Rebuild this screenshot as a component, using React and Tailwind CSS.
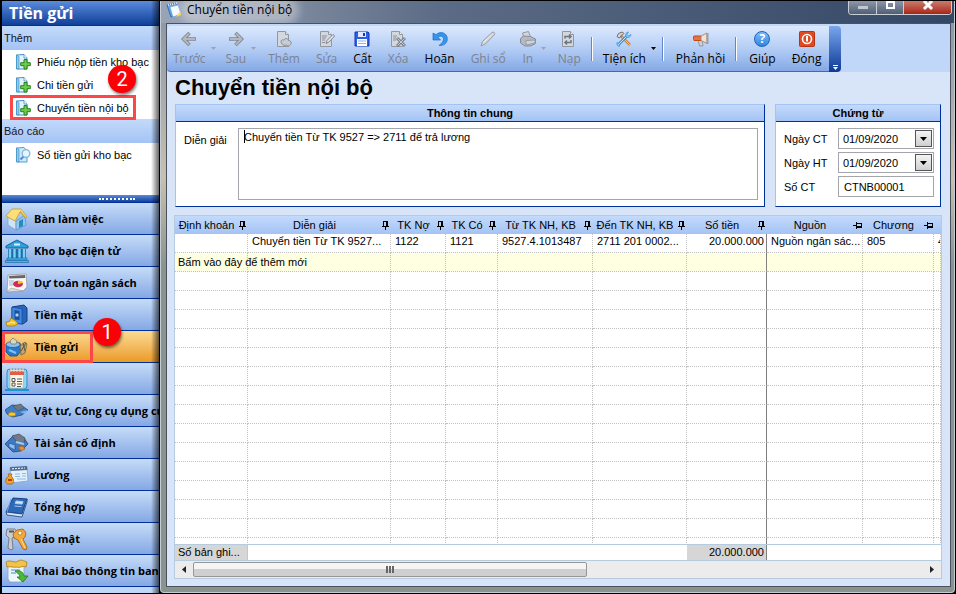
import clsx from "clsx"

const ArrowIcon = ({ flip }) => (
  <svg viewBox="0 0 16 16" className={clsx("h-4 w-4", flip && "-scale-x-100")} fill="none">
    <path d="M15 8H3M8.500 2 2.500 8l6 6" stroke="#80868f" strokeWidth="3.600" />
    <path d="M14.200 8H3M8 2.500 2.500 8 8 13.500" stroke="#b3b8c0" strokeWidth="1.800" />
  </svg>
)

const PageIcon = ({ kind }) => (
  <svg viewBox="0 0 16 16" className="h-4 w-4">
    <path d="M1.500.5h8l3 3v12h-11z" fill="#d3d8df" stroke="#9298a2" />
    <path d="M9.500.5v3h3" fill="#eef0f4" stroke="#9298a2" />
    {kind === "add" && (
      <path d="M5.500 12c-1.500-2.500 1-4 2.500-2.800C9 6.500 12.500 7.500 12.500 9.500c2.500 0 3.500 2.500 2 4-1 2-3.500 1.500-4 .500-2 1-4.500 0-5-2z" fill="#c9cdd3" stroke="#858b95" />
    )}
    {kind === "edit" && (
      <>
        <path d="M3 5h5M3 7h4M3 9h3M3 11.500h3" stroke="#8a9099" />
        <path d="m7 12.500 1-3 6-6 1.700 1.500-6 6.200z" fill="#e6e8ec" stroke="#7d838d" />
      </>
    )}
    {kind === "delete" && (
      <>
        <path d="M3 5h4M3 7h3M3 9h3" stroke="#8a9099" />
        <path d="m7 7 8 8M15 7l-8 8" stroke="#7d838d" strokeWidth="3" />
        <path d="m7.500 7.500 7 7M14.500 7.500l-7 7" stroke="#c9cdd4" />
      </>
    )}
    {kind === "reload" && (
      <path d="M4 7.500V5.500h5M8 3.500l2 2-2 2M10 9v2.500H5M6 9.500l-2 2 2 2" fill="none" stroke="#70767f" strokeWidth="1.500" />
    )}
  </svg>
)

const SaveIcon = () => (
  <svg viewBox="0 0 16 16" className="h-4 w-4">
    <path d="M1 1h13l1 1v13H1z" fill="#2f5fe8" stroke="#1237b8" />
    <path d="M4 1h8v5H4z" fill="#dfe9ff" />
    <path d="M9 2h2v3H9z" fill="#1237b8" />
    <path d="M3 8h10v7H3z" fill="#fff" />
    <path d="M4 10h8M4 12.500h8" stroke="#8fb0f4" />
  </svg>
)

const UndoIcon = () => (
  <svg viewBox="0 0 16 16" className="h-4 w-4">
    <path d="M1 2v7h7.500L6 6.200C8.500 4 12 5.500 11.500 8.500c-.300 2.500-2 4-4.500 6C12 15 15.500 12 15.300 7.500 15 2 8.500-.5 4 3.700z" fill="#3596ee" stroke="#1a6fcb" strokeWidth=".7" />
  </svg>
)

const PenIcon = () => (
  <svg viewBox="0 0 16 16" className="h-4 w-4">
    <path d="m1 15 1.500-4.500L12 1.500c1.500-1.200 3.500.500 2.500 2L5.500 13z" fill="#d0d3d8" stroke="#9a9ea6" />
    <path d="m3.500 11.500 9-8.500" stroke="#eef0f2" />
  </svg>
)

const PrintIcon = () => (
  <svg viewBox="0 0 16 16" className="h-4 w-4">
    <path d="m2.500 2 6-1.500L10.500 6 4 7z" fill="#d3d6db" stroke="#9298a1" />
    <path d="M.5 7.500 3.500 5l7 .500 5 2.500v4.500L10.500 15H5L.5 12z" fill="#b5bac2" stroke="#868c96" />
    <path d="M6 9.500 15 9v3l-9 2z" fill="#d0d4da" stroke="#969ca5" />
  </svg>
)

const ToolsIcon = () => (
  <svg viewBox="0 0 16 16" className="h-4 w-4" fill="none">
    <path d="m5 5 9 9" stroke="#c98436" strokeWidth="2.600" />
    <path d="m6 6 8 8" stroke="#f6c479" />
    <path d="M1 5.500 2.500 2.500 6 1l2 1.500-1 1-1.500.500L4.500 6 3 7z" fill="#d6d6d6" stroke="#6d6d6d" />
    <path d="m3 13 8-8" stroke="#4395d8" strokeWidth="3" />
    <path d="m3 13 8-8" stroke="#bfe3fb" />
    <path d="M15 3.500 12.500 5 11 3.500 12.500 1C10.500 1 9 3 10 5s4 2.500 5-1.500zM1 11.500 3.500 13v2.500C1.500 15.500.500 13.500 1 11.500z" fill="#8ecbf5" stroke="#4395d8" strokeWidth=".8" />
  </svg>
)

const HornIcon = () => (
  <svg viewBox="0 0 16 16" className="h-4 w-4">
    <path d="M5 9h4l1 6H6.500z" fill="#cdd1d6" stroke="#9297a0" />
    <path d="M1 5h7v4.500H1c-.8-1-.8-3.500 0-4.500z" fill="#e9713a" stroke="#bd4b1b" />
    <path d="M8 5l6-3v10.500L8 9.500z" fill="#eee3d8" stroke="#b08e76" />
    <path d="M14.500 2v11" stroke="#9aa0a8" strokeWidth="2" />
  </svg>
)

const HelpIcon = () => (
  <span className="flex h-4 w-4 items-center justify-center rounded-full border border-[#1f62b5] bg-linear-to-b from-[#7cbcf7] to-[#2f85e0] text-xs font-bold text-white">
    ?
  </span>
)

const PowerIcon = () => (
  <svg viewBox="0 0 16 16" className="h-4 w-4">
    <rect x=".5" y=".5" width="15" height="15" rx="1" fill="#e04a22" stroke="#b93212" />
    <circle cx="8" cy="8" r="4.500" fill="none" stroke="#fff" strokeWidth="1.600" />
    <path d="M8 5v5.500" stroke="#fff" strokeWidth="2" />
  </svg>
)

const AddDocIcon = () => (
  <svg viewBox="0 0 16 16" className="h-4 w-4 shrink-0">
    <path d="M1.500 1 9 .500l3 3.500v11H1.500z" fill="#e3f3fd" stroke="#3f8fc4" />
    <path d="M1.500 1 4 2.500V15l-2.500-.5z" fill="#8ccdf0" stroke="#3f8fc4" strokeWidth=".7" />
    <path d="M9 .5V4h3" fill="#fff" stroke="#3f8fc4" strokeWidth=".8" />
    <path d="M9 5.500h3v3.200h3.300v3H12V15H9v-3.300H5.700v-3H9z" fill="#6ccb4f" stroke="#25831c" />
  </svg>
)

const ReportIcon = () => (
  <svg viewBox="0 0 16 16" className="h-4 w-4 shrink-0">
    <path d="M1.500 1 9 .500l3 3.500v11H1.500z" fill="#cfeafb" stroke="#4f9fd2" />
    <path d="M1.500 1 4 2.500V15l-2.500-.5z" fill="#8ccdf0" stroke="#3f8fc4" strokeWidth=".7" />
    <path d="m5.500 12.500 3-3" stroke="#5b7ed6" strokeWidth="2" />
    <circle cx="11" cy="6.500" r="3.800" fill="#e6f5ff" stroke="#7fb4dc" strokeWidth="1.300" />
  </svg>
)

const navIcons = {
  home: (
    <>
      <path d="m3 10 8 4v9l-8-5z" fill="#cfe4f5" stroke="#6b9cc4" strokeWidth=".6" />
      <path d="m11 14 9-6 1 10-10 5z" fill="#8fc6ec" stroke="#4a8bbd" strokeWidth=".6" />
      <path d="m14 14 4-2v7l-4 2z" fill="#2e86c6" />
      <path d="m1 9 6-7 9 0 6 8-2 1-5-6-5 9z" fill="#fbe07a" stroke="#c79a2b" strokeWidth=".8" />
      <path d="m15 4 6 7" stroke="#c79a2b" />
    </>
  ),
  bank: (
    <>
      <path d="m1 7 11-6 11 6v2H1z" fill="#2ea0dc" stroke="#12659d" />
      <path d="M9 5.500h6" stroke="#d8f1ff" strokeWidth="2" />
      <path d="M3 10h18v9H3z" fill="#1c6dab" />
      <path d="M5 10v9M9.500 10v9M14.500 10v9M19 10v9" stroke="#7dd0f5" strokeWidth="2.400" />
      <path d="M2 19h20v2H2zM.500 21.500h23v2H.500z" fill="#49b4e6" stroke="#12659d" strokeWidth=".6" />
    </>
  ),
  budget: (
    <>
      <path d="m3 4 18-1 1 13-4 4-16 1z" fill="#f6f6f6" stroke="#999" strokeWidth=".8" />
      <path d="m4 5 16-1 .3 3-16 .6z" fill="#666" />
      <path d="M4 10h5M4 12h4M4 14h4" stroke="#9ab5d9" />
      <ellipse cx="13" cy="13" rx="5" ry="3.300" fill="#cf2d55" />
      <path d="m13 13 5-1c0-2-3-2.500-5-2z" fill="#f2c832" />
      <path d="m2 21 4-4 12 3z" fill="#dadada" stroke="#999" strokeWidth=".6" />
    </>
  ),
  safe: (
    <>
      <path d="m7 4 12-2 3 3v13l-4 3-11-1z" fill="#2864be" stroke="#153f86" />
      <path d="m7 4 10 2v15L7 20z" fill="#3f8ae0" stroke="#153f86" strokeWidth=".6" />
      <path d="m9.500 7 5 1v9l-5-.5z" fill="#1d4f9f" />
      <circle cx="12" cy="12" r="2" fill="#b3d3f6" stroke="#153f86" strokeWidth=".6" />
      <path d="M1 19h3l2-4 5 3 2 3-4 2H2z" fill="#f7c321" stroke="#a9780c" strokeWidth=".8" />
      <path d="m2 21 4-2 4 1" stroke="#fff0a0" fill="none" />
    </>
  ),
  deposit: (
    <>
      <path d="m1 9 14-1 1 8-4 5H5l-4-4z" fill="#2a78c8" stroke="#164a88" strokeWidth=".8" />
      <ellipse cx="8" cy="9.500" rx="7" ry="3" fill="#8ac2ee" stroke="#164a88" strokeWidth=".6" />
      <path d="m5 6 3-3 4 3-1 3H6z" fill="#ddd7c2" stroke="#807b6a" strokeWidth=".8" />
      <path d="m15 11 5-4 2 2-2 9-4 2z" fill="#b9a77d" stroke="#6c6040" strokeWidth=".8" />
      <path d="m16 16 5-8M18 8l2 8" stroke="#5f5538" />
      <path d="m4 15 7 3" stroke="#83c0f2" strokeWidth="2" />
    </>
  ),
  receipt: (
    <>
      <rect x="2" y="2" width="20" height="20" rx="3" fill="#8fd3f4" stroke="#2a8cc4" />
      <path d="M5 3h14l-1 18H5z" fill="#fff8e9" stroke="#b8a98b" strokeWidth=".7" />
      <path d="M5 4h14v4H5z" fill="#e25d4e" />
      <path d="M6 1v4M9 1v4M12 1v4M15 1v4M18 1v4" stroke="#f6ddd2" />
      <path d="M7 11.500h3v3H7zM7 16h3v3H7z" fill="none" stroke="#555" />
      <path d="M12 12h5M12 14.500h5M12 17h5M12 19.500h4" stroke="#555" />
      <path d="M0 23h24" stroke="#1d95d4" strokeWidth="2" />
    </>
  ),
  supplies: (
    <>
      <path d="m0 11 7-5 10 1 6 4-6 5-9 2-6-3z" fill="#3f7cc6" stroke="#1d4b8a" strokeWidth=".8" />
      <path d="m8 7 8-2 3 4-6 3z" fill="#6d7883" stroke="#444d57" strokeWidth=".6" />
      <path d="m15 13 8-2-3 4z" fill="#7db5ef" />
      <path d="m3 15 3-2 5 1-1 3-6 0z" fill="#f6c72f" stroke="#a47c10" strokeWidth=".7" />
    </>
  ),
  assets: (
    <>
      <path d="m0 13 8-8 11 2 4 6-7 7-8 1z" fill="#3c7ac4" stroke="#1c4781" strokeWidth=".8" />
      <path d="m7 5 7-2 6 4-1 5-7-1z" fill="#6f7b88" stroke="#414b57" strokeWidth=".7" />
      <path d="m4 12 6 2v5l-6-3z" fill="#8fbdf0" stroke="#1c4781" strokeWidth=".6" />
      <path d="m13 16 5-1 2 3-4 2z" fill="#ea8b2e" stroke="#9d5310" strokeWidth=".6" />
      <path d="m11 11 8 2" stroke="#a6cbf4" strokeWidth="2" />
    </>
  ),
  payroll: (
    <>
      <path d="m5 5 17-1 1 14-17 2z" fill="#e4f1fd" stroke="#77a6d4" strokeWidth=".8" />
      <path d="m5 4 17-1 .3 4L5.300 8z" fill="#4c6c93" />
      <path d="M7 5.800 20 5" stroke="#dbe7f5" strokeWidth="1.200" strokeDasharray="2 1" />
      <path d="M10 11h5M10 13.500h5M17 10.500h4M17 13h4M12 16h9" stroke="#8cb8e4" />
      <path d="M3 11h4l-1 2c3 2 3.500 7 1 8H2.500C0 20 0 15 4 13z" fill="#f0a527" stroke="#a5620e" strokeWidth=".8" />
      <path d="M3 17h4" stroke="#c93b16" strokeWidth="2" />
    </>
  ),
  ledger: (
    <>
      <path d="m8 3 14 1-5 15L1 17z" fill="#2c69b8" stroke="#153e7c" />
      <path d="m1 17 16 2 5-15v3l-5 15-15-2z" fill="#d8e5f5" stroke="#153e7c" strokeWidth=".8" />
      <path d="m11 6 7 .600-.8 2.500-7-.6zM9.500 11l7 .600" fill="#d3e6fb" stroke="#a9caef" />
      <path d="m6 4-4 13" stroke="#75a9e3" />
    </>
  ),
  keys: (
    <>
      <path d="M2 2h8l2 3-2 5-3 1 1 11-2 1-3-2 1-10-3-3z" fill="#c9ccd1" stroke="#666b72" strokeWidth=".8" />
      <path d="M4 4.500h5" stroke="#555" strokeWidth="2" />
      <path d="m12 3 6-1 3 4-1 4-2 2 4 8-1 3-3-1-5-9-4-2-1-4z" fill="#f2a93b" stroke="#9d5e10" strokeWidth=".8" />
      <circle cx="15" cy="6" r="2" fill="#fff1cf" stroke="#9d5e10" strokeWidth=".6" />
      <path d="m16 12 4 9" stroke="#ffdf96" />
    </>
  ),
  declare: (
    <>
      <path d="M3 6h16v14l-3 3H5l-2-3z" fill="#eef5fb" stroke="#86a6c4" strokeWidth=".8" />
      <path d="M1 3c4-3 9 2 12-1 3-2 6 0 9 1l-1 5c-4-2-7 2-9 0-3 1-7-1-10 0z" fill="#f3c24a" stroke="#a97b14" strokeWidth=".8" />
      <path d="M6 11h9M6 14h5" stroke="#9dc0e0" strokeWidth="2" />
      <path d="M10 12c4-1 8 0 9 5h4l-5 6-6-5h3c0-3-3-4-5-6z" fill="#4cb93b" stroke="#1f7a17" strokeWidth=".8" />
    </>
  ),
}

const NavIcon = ({ name }) => (
  <svg viewBox="0 0 24 24" className="h-6 w-6 shrink-0">
    {navIcons[name]}
  </svg>
)

const addLinks = [
  { label: "Phiếu nộp tiền kho bạc" },
  { label: "Chi tiền gửi", badge: "2" },
  { label: "Chuyển tiền nội bộ", marked: true },
]

const navItems = [
  { label: "Bàn làm việc", icon: "home" },
  { label: "Kho bạc điện tử", icon: "bank" },
  { label: "Dự toán ngân sách", icon: "budget" },
  { label: "Tiền mặt", icon: "safe" },
  { label: "Tiền gửi", icon: "deposit", active: true },
  { label: "Biên lai", icon: "receipt" },
  { label: "Vật tư, Công cụ dụng cụ", icon: "supplies" },
  { label: "Tài sản cố định", icon: "assets" },
  { label: "Lương", icon: "payroll" },
  { label: "Tổng hợp", icon: "ledger" },
  { label: "Bảo mật", icon: "keys" },
  { label: "Khai báo thông tin ban", icon: "declare" },
]

const tools = [
  { label: "Trước", icon: <ArrowIcon />, disabled: true, menu: true },
  { label: "Sau", icon: <ArrowIcon flip />, disabled: true, menu: true },
  { label: "Thêm", icon: <PageIcon kind="add" />, disabled: true },
  { label: "Sửa", icon: <PageIcon kind="edit" />, disabled: true },
  { label: "Cất", icon: <SaveIcon /> },
  { label: "Xóa", icon: <PageIcon kind="delete" />, disabled: true },
  { label: "Hoãn", icon: <UndoIcon /> },
  { label: "Ghi sổ", icon: <PenIcon />, disabled: true },
  { label: "In", icon: <PrintIcon />, disabled: true, menu: true },
  { label: "Nạp", icon: <PageIcon kind="reload" />, disabled: true, divider: true },
  { label: "Tiện ích", icon: <ToolsIcon />, menu: true, divider: true },
  { label: "Phản hồi", icon: <HornIcon />, divider: true },
  { label: "Giúp", icon: <HelpIcon /> },
  { label: "Đóng", icon: <PowerIcon /> },
]

const columns = [
  { title: "Định khoản", width: "w-[73px]", pin: "down" },
  { title: "Diễn giải", width: "w-[143px]", pin: "down", value: "Chuyển tiền Từ TK 9527..." },
  { title: "TK Nợ", width: "w-[55px]", pin: "down", value: "1122" },
  { title: "TK Có", width: "w-[52px]", pin: "down", value: "1121" },
  { title: "Từ TK NH, KB", width: "w-[95px]", pin: "down", value: "9527.4.1013487" },
  { title: "Đến TK NH, KB", width: "w-[94px]", pin: "down", value: "2711 201 0002..." },
  { title: "Số tiền", width: "w-[80px]", pin: "down", value: "20.000.000", frozen: true },
  { title: "Nguồn", width: "w-[96px]", pin: "side", value: "Nguồn ngân sác..." },
  { title: "Chương", width: "w-[71px]", pin: "side", value: "805" },
  { title: "", width: "", value: "4" },
]

const Pin = ({ side }) => (
  <svg viewBox="0 0 9 9" className={clsx("h-[9px] w-[9px] shrink-0", side && "rotate-90")} shapeRendering="crispEdges">
    <path d="M2 0h5v6H2zM3 1v4h2V1z" fillRule="evenodd" fill="#000" />
    <path d="M1 5h7v1H1zM4 6h1v3H4z" fill="#000" />
  </svg>
)

const Caret = ({ small }) => (
  <svg viewBox="0 0 7 4" className={clsx("shrink-0", small ? "h-[3px] w-[5px]" : "h-1 w-[7px]")} fill="currentColor">
    <path d="M0 0h7L3.500 4z" />
  </svg>
)

const Badge = ({ children, className }) => (
  <span
    className={clsx(
      "absolute z-10 flex h-7 w-7 items-center justify-center rounded-full bg-[#fb0007] font-[Roboto,sans-serif] text-xl font-normal text-white shadow-[1px_2px_3px_rgba(0,0,0,0.5)]",
      className
    )}
  >
    {children}
  </span>
)

function Sidebar() {
  return (
    <aside className="relative flex w-[157px] shrink-0 flex-col overflow-hidden bg-white">
      <h2 className="h-[25px] shrink-0 border-b border-[#00309c] bg-linear-to-b from-[#5a8bdc] to-[#0f3f99] pl-[7px] font-[Open_Sans,sans-serif] text-base leading-6 font-bold text-white">
        Tiền gửi
      </h2>
      <SectionTitle>Thêm</SectionTitle>
      <ul>
        {addLinks.map((link) => (
          <li key={link.label} className="relative">
            <a href="#" className="flex h-[23px] items-center gap-[6px] pl-[13px] whitespace-nowrap">
              <AddDocIcon />
              {link.label}
            </a>
            {link.marked && <span className="absolute -inset-y-px left-2 w-[126px] border-[3px] border-[#fb4747]" />}
            {link.badge && <Badge className="-top-2 left-[106px]">{link.badge}</Badge>}
          </li>
        ))}
      </ul>
      <SectionTitle>Báo cáo</SectionTitle>
      <a href="#" className="flex h-6 items-center gap-[6px] pl-[13px] whitespace-nowrap">
        <ReportIcon />
        Sổ tiền gửi kho bạc
      </a>
      <div className="min-h-0 flex-1" />
      <div className="flex h-[7px] shrink-0 items-center justify-center bg-linear-to-b from-[#5a8bdc] to-[#0f3f99] pl-[72px]">
        <div className="w-9 border-t-2 border-dotted border-white" />
      </div>
      <nav className="shrink-0 border-t border-[#00309c]">
        {navItems.map((item) => (
          <div key={item.label} className="relative">
            <button
              type="button"
              className={clsx(
                "flex h-8 w-full items-center gap-[5px] overflow-hidden border-b border-[#00309c] bg-linear-to-b pl-[3px] font-[Open_Sans,sans-serif] text-[11px] font-bold whitespace-nowrap",
                item.active ? "from-[#fbdb90] to-[#eb9a1d]" : "from-[#c6dcf8] to-[#85a8e4]"
              )}
            >
              <NavIcon name={item.icon} />
              {item.label}
            </button>
            {item.active && (
              <>
                <span className="absolute inset-y-0 left-0 w-[91px] border-[3px] border-[#fb4747]" />
                <Badge className="-top-[13px] left-[91px]">1</Badge>
              </>
            )}
          </div>
        ))}
      </nav>
      <div className="h-[6px] shrink-0 bg-[#c0d8f7]" />
      <div className="pointer-events-none absolute inset-y-0 right-0 w-2 bg-linear-to-r from-transparent to-black/60" />
    </aside>
  )
}

const SectionTitle = ({ children }) => (
  <h3 className="h-6 shrink-0 bg-linear-to-b from-[#c3dafa] to-[#a4c3f5] pl-[2px] leading-6 text-[#15151f]">{children}</h3>
)

function TitleBar() {
  return (
    <header className="flex h-[22px] shrink-0 items-start bg-linear-to-r from-[#9aa4b4] via-[#5c6c86] via-35% to-[#344765] pr-[2px] pl-[5px]">
      <svg viewBox="0 0 16 16" className="mt-px h-4 w-4">
        <path d="m1 3 9-2 4 11-9 3z" fill="#5ba4ee" stroke="#2d6fc0" />
        <path d="m4 5 8-2 3 9-8 3z" fill="#f7fbff" stroke="#6fa6de" strokeWidth=".7" />
        <path d="m10 15 5-2-1-4z" fill="#f5d25a" />
        <path d="m2 3 9-2" stroke="#dfe7f0" strokeDasharray="1 1" strokeWidth="2" />
      </svg>
      <h1 className="ml-1 rounded-full bg-white/35 px-px font-[Open_Sans,sans-serif] text-xs leading-[18px] shadow-[0_0_8px_6px_rgba(255,255,255,0.35)]">
        Chuyển tiền nội bộ
      </h1>
      <div className="ml-auto flex h-[14px] overflow-hidden rounded-b border border-t-0 border-[#c9cfd8] text-white">
        <button type="button" aria-label="Thu nhỏ" className="flex w-7 items-center justify-center border-r border-[#c9cfd8] bg-linear-to-b from-[#8d98a9] to-[#515f76]">
          <span className="h-[3px] w-[10px] bg-[#c3c8d0]" />
        </button>
        <button type="button" aria-label="Phóng to" className="flex w-[27px] items-start justify-center border-r border-[#c9cfd8] bg-linear-to-b from-[#8d98a9] to-[#515f76]">
          <span className="h-2 w-[9px] border-2 border-white" />
        </button>
        <button type="button" aria-label="Đóng cửa sổ" className="flex w-[47px] items-start justify-center bg-linear-to-b from-[#c97a6f] to-[#a9200f]">
          <svg viewBox="0 0 12 10" className="h-[10px] w-3">
            <path d="m2 0 8 8M10 0 2 8" stroke="#fff" strokeWidth="3" />
          </svg>
        </button>
      </div>
    </header>
  )
}

function Toolbar() {
  return (
    <div className="flex h-12 shrink-0 bg-[#c0d7f9] pt-[2px]">
      <div className="flex items-center rounded-l border-b border-[#3f69b0] bg-linear-to-b from-[#dce9fd] via-[#b4cdf5] to-[#84a9e6] font-[Open_Sans,sans-serif] text-xs">
        {tools.map((tool) => (
          <div key={tool.label} className="flex items-center">
            <button
              type="button"
              disabled={tool.disabled}
              className={clsx(
                "flex h-11 flex-col items-center justify-between pt-1 pb-[3px] leading-[18px] whitespace-nowrap",
                tool.disabled && "text-[#7c8390]",
                tool.menu ? "pr-[5px] pl-[6px]" : "px-2"
              )}
            >
              {tool.icon}
              {tool.label}
            </button>
            {tool.menu && (
              <span className={clsx("pr-1", tool.disabled ? "text-[#9aa3b3]" : "text-black")}>
                <Caret small />
              </span>
            )}
            {tool.divider && <span className="mr-1 ml-[2px] h-6 w-[2px] border-r border-white bg-[#5f87cf]" />}
          </div>
        ))}
      </div>
      <div className="flex w-3 items-end justify-center rounded-r bg-linear-to-b from-[#7ba5ec] to-[#0b3a96] pb-[2px] text-white">
        <div className="flex flex-col items-center gap-px">
          <span className="h-px w-[5px] bg-white" />
          <Caret small />
        </div>
      </div>
    </div>
  )
}

const Panel = ({ title, className, children }) => (
  <section className={clsx("flex h-[103px] flex-col border border-t-[#a4c3f5] border-r-[#00309c] border-b-[#00309c] border-l-[#a4c3f5] bg-white", className)}>
    <h3 className="h-[17px] shrink-0 border-b border-[#00309c] bg-linear-to-b from-[#c3dafa] to-[#a4c3f5] text-center leading-4 font-bold">
      {title}
    </h3>
    {children}
  </section>
)

const DateField = ({ id, label, value }) => (
  <div className="flex items-center">
    <label htmlFor={id} className="w-[54px]">
      {label}
    </label>
    <div className="flex h-[21px] min-w-0 flex-1 border border-[#a5a5ad] p-px">
      <input id={id} defaultValue={value} className="min-w-0 flex-1 pl-[3px] outline-none" />
      <button type="button" aria-label={label} className="flex w-[17px] items-center justify-center border border-[#555] bg-linear-to-b from-[#f4f4f4] to-[#cfcfcf]">
        <Caret />
      </button>
    </div>
  </div>
)

const ColGroup = () => (
  <colgroup>
    {columns.map((col, i) => (
      <col key={i} className={col.width} />
    ))}
  </colgroup>
)

const edge = (col) =>
  col.frozen
    ? "border-r border-r-[#808080] [border-right-style:solid]"
    : "border-r border-r-[#c0c0c0] [border-right-style:dotted]"

const rowLine = "border-b border-b-[#c0c0c0] [border-bottom-style:dotted]"

function Grid() {
  return (
    <div className="mt-2 mr-2 mb-[7px] ml-[7px] flex min-h-0 flex-1 flex-col border border-[#b5cbdf] bg-white">
      <div className="min-h-0 flex-1 overflow-hidden">
        <table className="w-full table-fixed border-separate border-spacing-0">
          <ColGroup />
          <thead>
            <tr className="bg-linear-to-b from-[#c3dafa] to-[#a4c3f5]">
              {columns.map((col, i) => (
                <th key={i} className="h-[18px] p-0 font-normal">
                  <div className="flex items-center pr-px whitespace-nowrap">
                    <span className="flex-1">{col.title}</span>
                    {col.pin && <Pin side={col.pin === "side"} />}
                  </div>
                </th>
              ))}
            </tr>
          </thead>
          <tbody>
            <tr>
              {columns.map((col, i) => (
                <td
                  key={i}
                  className={clsx(
                    "h-[19px] overflow-hidden p-0 pb-1 leading-[14px] whitespace-nowrap",
                    col.frozen ? "pr-[2px] text-right" : "pl-1",
                    rowLine,
                    edge(col)
                  )}
                >
                  {col.value}
                </td>
              ))}
            </tr>
            <tr className="bg-[#ffffe1]">
              {columns.map((col, i) => (
                <td key={i} className={clsx("h-[19px] p-0 pl-[3px] leading-[18px] whitespace-nowrap", rowLine, edge(col))}>
                  {i === 0 && "Bấm vào đây để thêm mới"}
                </td>
              ))}
            </tr>
            {[...Array(40)].map((_, row) => (
              <tr key={row}>
                {columns.map((col, i) => (
                  <td key={i} className={clsx("h-[19px] p-0", rowLine, edge(col))} />
                ))}
              </tr>
            ))}
          </tbody>
        </table>
      </div>
      <table className="w-full shrink-0 table-fixed border-separate border-spacing-0 border-y border-[#b5cbdf]">
        <ColGroup />
        <tbody>
          <tr>
            {columns.map((col, i) => (
              <td
                key={i}
                className={clsx(
                  "h-[15px] p-0 leading-[15px] whitespace-nowrap",
                  i === 0 && "border-r border-[#b5cbdf] bg-[#d6d6d6] pl-[3px]",
                  col.frozen && "border-r border-[#808080] bg-[#d6d6d6] pr-[2px] text-right"
                )}
              >
                {i === 0 && "Số bản ghi..."}
                {col.frozen && "20.000.000"}
              </td>
            ))}
          </tr>
        </tbody>
      </table>
      <div className="flex h-[17px] shrink-0 items-center bg-[#ececec]">
        <button type="button" aria-label="Cuộn trái" className="flex h-full w-[18px] items-center justify-center">
          <svg viewBox="0 0 4 7" className="h-[7px] w-1">
            <path d="M4 0v7L0 3.500z" fill="#222" />
          </svg>
        </button>
        <div className="min-w-0 flex-1">
          <div className="flex h-[15px] w-[54%] items-center justify-center gap-px rounded-xs border border-[#979797] bg-linear-to-b from-[#f5f5f5] from-50% to-[#cfcfcf] to-50%">
            <span className="h-[7px] w-[2px] bg-[#666]" />
            <span className="h-[7px] w-[2px] bg-[#666]" />
            <span className="h-[7px] w-[2px] bg-[#666]" />
          </div>
        </div>
        <button type="button" aria-label="Cuộn phải" className="flex h-full w-[18px] items-center justify-center">
          <svg viewBox="0 0 4 7" className="h-[7px] w-1">
            <path d="M0 0v7l4-3.500z" fill="#222" />
          </svg>
        </button>
      </div>
    </div>
  )
}

export default function App() {
  return (
    <div className="flex h-screen overflow-hidden border border-l-2 border-black bg-black font-[Liberation_Sans,Arial,sans-serif] text-[11px] leading-4 text-black">
      <Sidebar />
      <div className="ml-px flex min-w-0 flex-1 flex-col overflow-hidden rounded-b border-x border-b border-[#c3cbd3] bg-linear-to-b from-[#8793a6] via-[#c9c0ab] via-30% to-[#8b938f] to-45%">
        <TitleBar />
        <main className="mr-[3px] mb-[5px] ml-[5px] flex min-h-0 flex-1 flex-col border border-[#4a5260] bg-[#d8e4f8]">
          <Toolbar />
          <h2 className="shrink-0 px-2 text-[22px] leading-8 font-bold">Chuyển tiền nội bộ</h2>
          <div className="flex shrink-0 gap-[10px] pr-[9px] pl-2">
            <Panel title="Thông tin chung" className="min-w-0 flex-1">
              <div className="flex min-h-0 flex-1 pt-[6px] pr-[6px] pb-[6px] pl-2">
                <label htmlFor="description" className="w-[54px] pt-1">
                  Diễn giải
                </label>
                <div className="relative flex min-w-0 flex-1">
                  <textarea
                    id="description"
                    className="min-w-0 flex-1 resize-none border border-[#a5a5ad] px-[5px] leading-4 outline-none"
                    defaultValue="Chuyển tiền Từ TK 9527 => 2711 để trả lương"
                  />
                  <span className="absolute top-[2px] left-[6px] h-[13px] w-px bg-black" />
                </div>
              </div>
            </Panel>
            <Panel title="Chứng từ" className="w-[166px] shrink-0">
              <div className="flex flex-col gap-[3px] pt-[6px] pr-[6px] pl-2">
                <DateField id="voucher-date" label="Ngày CT" value="01/09/2020" />
                <DateField id="posting-date" label="Ngày HT" value="01/09/2020" />
                <div className="flex items-center">
                  <label htmlFor="voucher-no" className="w-[54px]">
                    Số CT
                  </label>
                  <input id="voucher-no" defaultValue="CTNB00001" className="h-[21px] min-w-0 flex-1 border border-[#a5a5ad] pl-[5px] outline-none" />
                </div>
              </div>
            </Panel>
          </div>
          <Grid />
        </main>
      </div>
    </div>
  )
}
